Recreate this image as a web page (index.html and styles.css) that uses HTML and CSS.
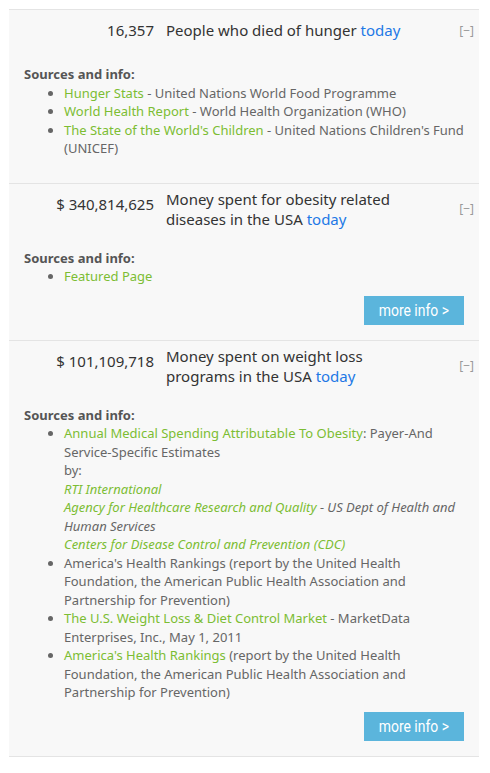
FILE: index.html
```html
<!DOCTYPE html>
<html lang="en">
<head>
  <meta charset="UTF-8" />
  <meta name="viewport" content="width=device-width, initial-scale=1.0" />
  <title>Counters</title>
  <link rel="stylesheet" href="styles.css">
</head>
<body>

  <div class="counters">

    <div class="stat">
      <div class="stat-head">
        <div class="stat-num">16,357</div>
        <div class="stat-text">People who died of hunger <a href="#" class="today">today</a></div>
        <span class="toggle">[&minus;]</span>
      </div>
      <div class="sources">
        <strong>Sources and info:</strong>
        <ul>
          <li><a href="#">Hunger Stats</a> - United Nations World Food Programme</li>
          <li><a href="#">World Health Report</a> - World Health Organization (WHO)</li>
          <li><a href="#">The State of the World's Children</a> - United Nations Children's Fund (UNICEF)</li>
        </ul>
      </div>
    </div>

    <div class="stat">
      <div class="stat-head">
        <div class="stat-num">$ 340,814,625</div>
        <div class="stat-text">Money spent for obesity related diseases in the USA <a href="#" class="today">today</a></div>
        <span class="toggle">[&minus;]</span>
      </div>
      <div class="sources">
        <strong>Sources and info:</strong>
        <ul>
          <li><a href="#">Featured Page</a></li>
        </ul>
      </div>
      <div class="more"><a href="#" class="more-btn"><span>more info &gt;</span></a></div>
    </div>

    <div class="stat">
      <div class="stat-head">
        <div class="stat-num">$ 101,109,718</div>
        <div class="stat-text">Money spent on weight loss programs in the USA <a href="#" class="today">today</a></div>
        <span class="toggle">[&minus;]</span>
      </div>
      <div class="sources">
        <strong>Sources and info:</strong>
        <ul>
          <li>
            <a href="#">Annual Medical Spending Attributable To Obesity</a>: Payer-And Service-Specific Estimates<br>
            by:<br>
            <em><a href="#">RTI International</a></em><br>
            <em><a href="#">Agency for Healthcare Research and Quality</a> - US Dept of Health and Human Services</em><br>
            <em><a href="#">Centers for Disease Control and Prevention (CDC)</a></em>
          </li>
          <li>America's Health Rankings (report by the United Health Foundation, the American Public Health Association and Partnership for Prevention)</li>
          <li><a href="#">The U.S. Weight Loss &amp; Diet Control Market</a> - MarketData Enterprises, Inc., May 1, 2011</li>
          <li><a href="#">America's Health Rankings</a> (report by the United Health Foundation, the American Public Health Association and Partnership for Prevention)</li>
        </ul>
      </div>
      <div class="more"><a href="#" class="more-btn"><span>more info &gt;</span></a></div>
    </div>

  </div>

</body>
</html>
```

FILE: styles.css
```css
body {
  font-family: "Noto Sans", "Open Sans", sans-serif;
  background: #fff;
  margin: 0;
  padding: 9px 11px 0 9px;
}

.counters {
  background: #f8f8f8;
  border-top: 1px solid #e4e4e4;
}

.stat {
  padding: 0 15px 15px;
  border-bottom: 1px solid #e4e4e4;
}

.stat-head {
  display: flex;
  align-items: center;
  padding: 5px 0 6px;
}

.stat-num {
  align-self: flex-start;
  width: 130px;
  flex-shrink: 0;
  padding: 5px 0;
  text-align: right;
  font-size: 15px;
  line-height: 20px;
  color: #333;
}

.stat-text {
  width: 252px;
  margin-left: 12px;
  font-size: 15px;
  line-height: 20px;
  color: #333;
}

.today {
  color: #1e78e6;
  text-decoration: none;
}

.toggle {
  margin-left: auto;
  margin-right: -10px;
  font-size: 12px;
  color: #999;
}

.sources {
  margin-top: 14px;
  font-size: 13px;
  line-height: 18.5px;
  color: #666;
}

.sources strong {
  color: #555;
}

.sources ul {
  margin: 0 0 10px;
  padding-left: 40px;
}

.sources a {
  color: #7cbd33;
  text-decoration: none;
}

.more {
  margin-top: 2px;
  text-align: right;
}

.more-btn {
  display: inline-block;
  width: 100px;
  height: 29px;
  line-height: 29px;
  text-align: center;
  background: #5bb5dc;
  color: #fff;
  font-family: Roboto, sans-serif;
  font-size: 17px;
  text-decoration: none;
}

.more-btn span {
  display: inline-block;
  transform: scaleX(0.82);
}
```
